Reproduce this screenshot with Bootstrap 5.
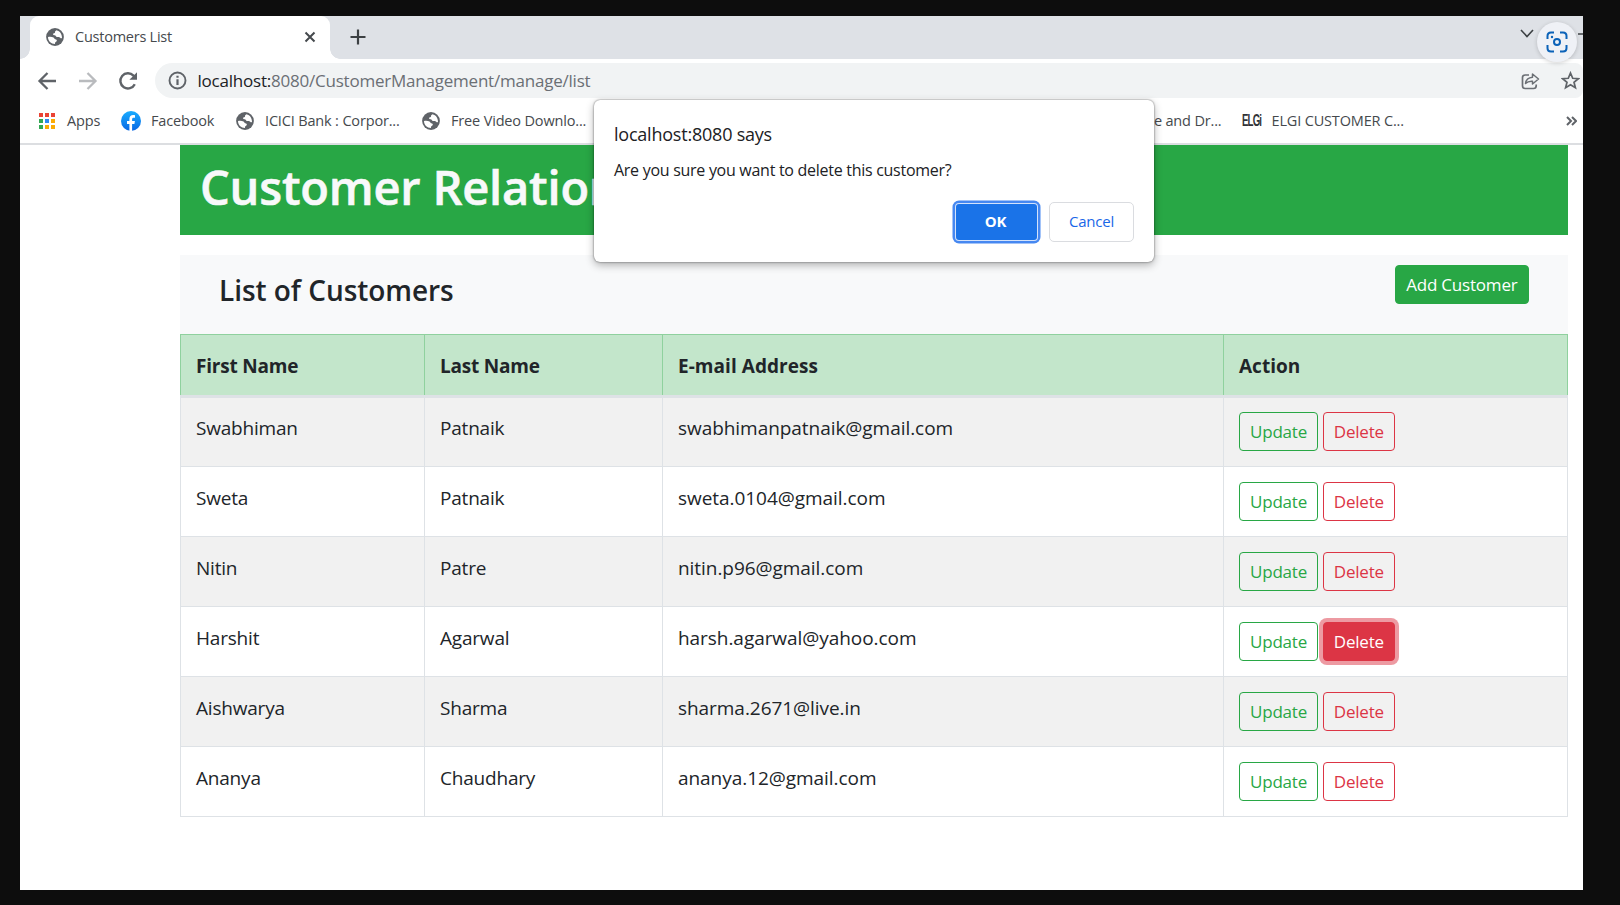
<!DOCTYPE html>
<html lang="en">
<head>
<meta charset="utf-8">
<meta name="viewport" content="width=device-width, initial-scale=1">
<title>Customers List</title>
<link href="https://cdn.jsdelivr.net/npm/bootstrap@5.3.0/dist/css/bootstrap.min.css" rel="stylesheet">
<style>
  body{background:#0d0d0d;font-family:"Open Sans","Noto Sans",sans-serif;height:905px;overflow:hidden;padding:16px 37px 15px 20px}
  .browser{height:874px;background:#fff;overflow:hidden;position:relative}
  .browser svg{flex:none;display:block}
  .tabstrip{height:43px;background:#dee1e6;padding-left:10px}
  .tab-on{width:300px;background:#fff;border-radius:9px 9px 0 0;padding:0 14px 1px 16px;font-size:14.5px;letter-spacing:-.24px;color:#45494d;position:relative}
  .tab-on::before,.tab-on::after{content:"";position:absolute;bottom:0;width:10px;height:10px}
  .tab-on::before{left:-10px;background:radial-gradient(circle at 0 0,#dee1e6 9.5px,#fff 10px)}
  .tab-on::after{right:-10px;background:radial-gradient(circle at 100% 0,#dee1e6 9.5px,#fff 10px)}
  .tab-title{margin-left:11px}
  .new-tab{margin:13px 0 0 20px}
  .tab-search{margin:13px 49px 0 0}
  .minimise{margin:17px 0 0 -5px}
  .toolbar{height:41px;padding:4px 0 2px 17px}
  .omnibox{background:#f1f3f4;border-radius:18px 8px 8px 18px;height:35px;padding:0 3px 0 13px;font-size:17px;letter-spacing:-.22px;color:#6b6f74;margin-left:17px}
  .omnibox .url{margin-left:10.5px}
  .omnibox b{font-weight:400;color:#202124}
  .bookmarks{height:45px;border-bottom:2px solid #dcdee1;font-size:14.5px;letter-spacing:-.16px;color:#45494d;padding:0 6px 2px 18px}
  .bookmark{gap:11px;white-space:nowrap}
  .elgi-logo{font:700 17px/18px "Liberation Sans",sans-serif;letter-spacing:-1.500px;width:20px;color:#303236;transform:scaleX(.57);transform-origin:0 50%}
  .page-area{width:1387.5px;margin-left:160px}
  .banner{height:90px;background:#28a745;color:#f8f9fa;padding:0 20px;font-size:47px;font-weight:600;line-height:84px;letter-spacing:-.2px;-webkit-text-stroke:.6px #f8f9fa;margin:0}
  .banner span{display:block;width:395px;overflow:hidden}
  .panel{height:79px;margin-top:20px;background:#f8f9fa;padding:10px 39px 0 39px}
  .panel h4{font-size:28px;font-weight:600;line-height:50px;letter-spacing:-.04px;margin:0;color:#212529}
  .btn.btn-sm{--bs-btn-padding-x:10px;--bs-btn-padding-y:0;--bs-btn-border-radius:4px;--bs-btn-font-size:17px;height:39px;line-height:37px;--bs-btn-border-width:1.3px;letter-spacing:-.2px}
  .customers .btn{margin-top:-1px;position:relative;top:-.5px}
  .btn-success,.btn-outline-success{--bs-btn-bg:#28a745;--bs-btn-border-color:#28a745;--bs-btn-color:#28a745}
  .btn-success{--bs-btn-color:#fff}
  .btn-outline-success{--bs-btn-bg:transparent}
  .btn-outline-danger.focused{background:#dc3545;color:#fff;box-shadow:0 0 0 4px rgba(220,53,69,.5)}
  .customers{table-layout:fixed;margin:0;border-collapse:collapse;font-size:19px;color:#212529}
  .customers th,.customers td{border:1px solid #dee2e6;padding:15px;line-height:30px;vertical-align:top;box-shadow:none!important}
  .customers thead th{background:#c3e6cb;border-color:#8fd19e;border-bottom:3px solid #dee2e6;height:62px;font-weight:700;padding-top:16px;padding-bottom:10px;letter-spacing:-.2px}
  .customers tbody td{height:70px;padding-bottom:0;background:#fff;letter-spacing:-.2px}
  .customers tbody td:nth-child(3){letter-spacing:-.05px}
  .customers tbody tr:not(:first-child) td{padding-top:16px}
  .customers tbody tr:nth-child(odd) td{background:#f1f1f1}
  .js-dialog{position:absolute;left:574px;top:84px;width:560px;height:162px;background:#fff;border-radius:6px;box-shadow:0 0 2px rgba(0,0,0,.6),0 3px 8px rgba(0,0,0,.3);padding:20px;color:#202124}
  .dlg-origin{font-size:18px;line-height:28px;letter-spacing:-.22px}
  .dlg-text{font-size:16px;line-height:24px;margin-top:10px;letter-spacing:-.28px}
  .dlg-actions{gap:12px;margin-top:20px}
  .dlg-btn{height:40px;width:85px;border:1.5px solid #dadce0;border-radius:5px;font-size:15px;letter-spacing:-.25px;color:#1a67e8;background:#fff;font-weight:500;padding:0 0 1px}
  .dlg-btn.main-btn{width:81px;height:36px;border:0;background:#1a73e8;color:#fff;font-weight:700;border-radius:3px;padding-right:2px;box-shadow:0 0 0 1px #d4e3fb,0 0 0 3.5px #4688f1}
  .lens{position:absolute;left:1517px;top:6px;width:40px;height:40px;border-radius:50%;background:#eff1f6;box-shadow:0 1px 4px rgba(0,0,0,.18)}
</style>
</head>
<body>
<svg width="0" height="0" class="position-absolute"><defs>
  <symbol id="globe" viewBox="0 0 18 18"><circle cx="9" cy="9" r="8.900" fill="#5f6368"/><path d="M2 9c1.800-.3 4.200-.2 5.500.4 1 .5.700 1.600 1.800 1.900 1 .2 1.600.5 1.500 1.500-.1 1-1.200 1-1.600 1.800-.2.500-.2 1-.2 1.400C5 16 2 12.900 2 9zM10.500 2.200c-1 .5-1.700 1.300-1.500 2.200.1.700-1.800.6-2 1.600-.1.900.9 1.200 1.800 1.200 1 0 1 1.300 1.900 1.800 1.100.5 2.700-.2 3.500.8.600.8 1.300.6 1.800.2.200-3.700-2-7-5.500-7.800z" fill="#fff"/></symbol>
</defs></svg>
<div class="browser">
  <div class="tabstrip d-flex">
    <div class="tab-on d-flex align-items-center">
      <svg width="18" height="18"><use href="#globe"/></svg>
      <span class="tab-title flex-grow-1">Customers List</span>
      <svg width="12" height="12" viewBox="0 0 12 12"><path d="M1.500 1.500l9 9M10.500 1.500l-9 9" stroke="#45494d" stroke-width="2"/></svg>
    </div>
    <svg class="new-tab" width="16" height="16" viewBox="0 0 16 16"><path d="M8 .5v15M.5 8h15" stroke="#3c4043" stroke-width="2.200"/></svg>
    <svg class="tab-search ms-auto" width="14" height="9" viewBox="0 0 14 9"><path d="M1 1l6 6.500L13 1" fill="none" stroke="#3c4043" stroke-width="1.600"/></svg>
    <svg class="minimise" width="5" height="2"><path d="M0 1h5" stroke="#3c4043" stroke-width="1.500"/></svg>
  </div>
  <div class="toolbar d-flex align-items-center">
    <svg width="20" height="20" viewBox="0 0 20 20"><path d="M19 10H3M10.500 2L2.500 10l8 8" fill="none" stroke="#5f6368" stroke-width="2.300"/></svg>
    <svg style="margin-left:21px" width="20" height="20" viewBox="0 0 20 20"><path d="M1 10h16M9.500 2l8 8-8 8" fill="none" stroke="#b9bbbe" stroke-width="2.300"/></svg>
    <svg style="margin-left:20px" width="20" height="20" viewBox="0 0 20 20"><path d="M16.800 13.200A7.600 7.600 0 1 1 15.500 4.600L17 6" fill="none" stroke="#5f6368" stroke-width="2.400"/><path d="M19 1.200v7.600h-7.600z" fill="#5f6368"/></svg>
    <div class="omnibox d-flex align-items-center flex-grow-1">
      <svg width="19" height="19" viewBox="0 0 19 19"><circle cx="9.500" cy="9.500" r="8" fill="none" stroke="#5f6368" stroke-width="1.900"/><path d="M9.500 8.300v5.700M9.500 4.800v2" stroke="#5f6368" stroke-width="2.200"/></svg>
      <span class="url flex-grow-1"><b>localhost:</b>8080/CustomerManagement/manage/list</span>
      <svg width="19" height="18" viewBox="0 0 19 18"><path d="M8 3H4.200Q1.500 3 1.500 5.500v8.300Q1.500 16.500 4.200 16.500h8.300q2.700 0 2.700-2.700V12.500" fill="none" stroke="#6b6f74" stroke-width="1.700"/><path d="M4.500 11.500C5 7.500 7.500 5.500 11.500 5.200V2L17.500 7l-6 5V9.200C8.500 9 6.200 9.700 4.500 11.500z" fill="none" stroke="#6b6f74" stroke-width="1.500" stroke-linejoin="round"/></svg>
      <svg style="margin-left:21px" width="19" height="19" viewBox="0 0 19 19"><path d="M9.500 2l2.200 5.300 5.600.4-4.300 3.600 1.400 5.500-4.900-3-4.900 3L6 11.300 1.700 7.700l5.600-.4z" fill="none" stroke="#5f6368" stroke-width="1.700"/></svg>
    </div>
  </div>
  <div class="bookmarks d-flex align-items-center">
    <div class="bookmark d-flex align-items-center" style="width:83px"><svg width="18" height="18" viewBox="0 0 18 18"><path d="M1 1h4v4H1zM7 1h4v4H7zM13 1h4v4h-4z" fill="#ea4335"/><path d="M1 7h4v4H1zM1 13h4v4H1z" fill="#34a853"/><path d="M7 7h4v4H7z" fill="#2f8af0"/><path d="M13 7h4v4h-4zM7 13h4v4H7zM13 13h4v4h-4z" fill="#fbab04"/></svg>Apps</div>
    <div class="bookmark d-flex align-items-center" style="width:115px;gap:10px"><svg width="20" height="20" viewBox="0 0 20 20"><defs><linearGradient id="fb" x2="0" y2="1"><stop stop-color="#19adff"/><stop offset="1" stop-color="#0866e4"/></linearGradient></defs><circle cx="10" cy="10" r="10" fill="url(#fb)"/><path d="M8.400 20v-7H6v-3h2.400V8c0-2.700 1.500-4 3.700-4 .8 0 1.500.1 1.900.2v2.500h-1.400c-1.100 0-1.500.6-1.500 1.500V10h2.800l-.5 3h-2.300v7z" fill="#fff"/></svg>Facebook</div>
    <div class="bookmark d-flex align-items-center" style="width:186px"><svg width="18" height="18"><use href="#globe"/></svg>ICICI Bank : Corpor...</div>
    <div class="bookmark d-flex align-items-center"><svg width="18" height="18"><use href="#globe"/></svg>Free Video Downlo...</div>
    <span class="ms-auto">e and Dr...</span>
    <div class="bookmark d-flex align-items-center" style="width:324.5px;margin-left:20px"><span class="elgi-logo">ELGi</span><span style="margin-left:-1px">ELGI CUSTOMER C...</span></div>
    <svg width="11" height="10" viewBox="0 0 11 10"><path d="M1 1l4 4-4 4M6 1l4 4-4 4" fill="none" stroke="#5f6368" stroke-width="2"/></svg>
  </div>
  <main class="page-area">
    <h1 class="banner text-nowrap"><span>Customer Relation</span></h1>
    <div class="panel d-flex justify-content-between align-items-start">
      <h4>List of Customers</h4>
      <button class="btn btn-success btn-sm">Add Customer</button>
    </div>
    <table class="table customers">
      <colgroup><col style="width:244px"><col style="width:238px"><col style="width:561px"><col></colgroup>
      <thead><tr><th>First Name</th><th>Last Name</th><th style="letter-spacing:.05px">E-mail Address</th><th style="letter-spacing:0">Action</th></tr></thead>
      <tbody>
        <tr><td>Swabhiman</td><td>Patnaik</td><td>swabhimanpatnaik@gmail.com</td><td><button class="btn btn-sm btn-outline-success">Update</button> <button class="btn btn-sm btn-outline-danger">Delete</button></td></tr>
        <tr><td>Sweta</td><td>Patnaik</td><td>sweta.0104@gmail.com</td><td><button class="btn btn-sm btn-outline-success">Update</button> <button class="btn btn-sm btn-outline-danger">Delete</button></td></tr>
        <tr><td>Nitin</td><td>Patre</td><td>nitin.p96@gmail.com</td><td><button class="btn btn-sm btn-outline-success">Update</button> <button class="btn btn-sm btn-outline-danger">Delete</button></td></tr>
        <tr><td>Harshit</td><td>Agarwal</td><td>harsh.agarwal@yahoo.com</td><td><button class="btn btn-sm btn-outline-success">Update</button> <button class="btn btn-sm btn-outline-danger focused">Delete</button></td></tr>
        <tr><td>Aishwarya</td><td>Sharma</td><td>sharma.2671@live.in</td><td><button class="btn btn-sm btn-outline-success">Update</button> <button class="btn btn-sm btn-outline-danger">Delete</button></td></tr>
        <tr><td>Ananya</td><td>Chaudhary</td><td>ananya.12@gmail.com</td><td><button class="btn btn-sm btn-outline-success">Update</button> <button class="btn btn-sm btn-outline-danger">Delete</button></td></tr>
      </tbody>
    </table>
  </main>
  <div class="js-dialog">
    <div class="dlg-origin">localhost:8080 says</div>
    <div class="dlg-text">Are you sure you want to delete this customer?</div>
    <div class="dlg-actions d-flex justify-content-end align-items-center">
      <button class="dlg-btn main-btn">OK</button><button class="dlg-btn">Cancel</button>
    </div>
  </div>
  <div class="lens d-flex align-items-center justify-content-center">
    <svg width="22" height="22" viewBox="0 0 22 22" fill="none" stroke="#0b62b8" stroke-width="2"><path d="M1.500 8V5q0-3.500 3.500-3.500h3M14 1.500h3q3.500 0 3.500 3.500v3M20.500 14v3q0 3.500-3.500 3.500h-3M8 20.500H5q-3.500 0-3.500-3.500v-3"/><circle cx="11" cy="11" r="3"/><circle cx="6" cy="6" r="1.200" fill="#0b62b8" stroke="none"/></svg>
  </div>
</div>
<script src="https://cdn.jsdelivr.net/npm/bootstrap@5.3.0/dist/js/bootstrap.bundle.min.js"></script>
</body>
</html>
